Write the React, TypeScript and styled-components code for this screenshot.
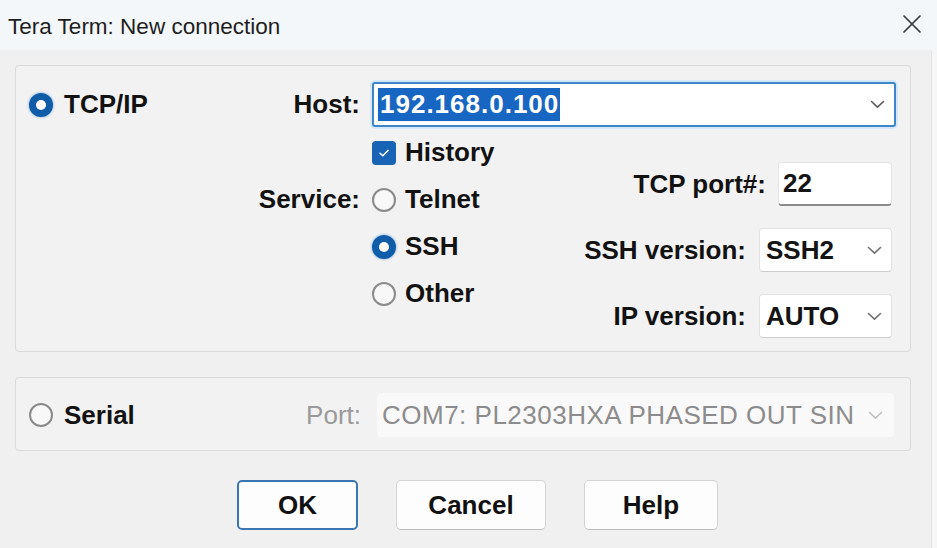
import React from 'react';
import styled, { createGlobalStyle, css } from 'styled-components';

const Global = createGlobalStyle`
  html, body { margin: 0; padding: 0; background: #f6f6f6; }
  body {
    width: 937px; height: 548px; overflow: hidden;
    font-family: "Liberation Sans", Arial, sans-serif; color: #151515;
  }
  * { box-sizing: border-box; }
`;

const Window = styled.div`
  width: 937px; height: 548px;
  display: flex; flex-direction: column;
  background: #f6f6f6;
`;

const TitleBar = styled.div`
  height: 50px; flex: none;
  display: flex; align-items: center; justify-content: space-between;
  padding: 0 14px 0 8px;
  background: #f4f7fa;
`;

const Title = styled.div`
  font-size: 22.5px; color: #1e1e1e; padding-top: 4px;
`;

const CloseButton = styled.div`
  width: 22px; height: 22px; display: flex; align-items: center; justify-content: center;
  margin-top: -2px;
`;

const Frame = styled.div`
  flex: 1; display: flex;
`;

const Body = styled.div`
  width: 932px; height: 100%;
  display: flex; flex-direction: column;
  padding: 15px 20px 0 15px;
  background: #f0f0f0;
  border-right: 1px solid #e3e3e3;
`;

const GroupBox = styled.div`
  width: 896px;
  border: 1px solid #dadada;
  border-radius: 4px;
  background: #f2f2f2;
`;

const TcpGroup = styled(GroupBox)`
  display: grid;
  grid-template-columns: 331px 1fr;
  column-gap: 12px; row-gap: 2px;
  padding: 16px 14px 13px 13px;
`;

const SerialGroup = styled(GroupBox)`
  margin-top: 25px;
  display: flex; align-items: center;
  padding: 15px 16px 13px 13px;
`;

const HostCell = styled.div`
  display: flex; align-items: center; justify-content: space-between;
`;

const ServiceLabelCell = styled.div`
  padding-top: 47px;
  height: 94px;
  display: flex; align-items: center; justify-content: flex-end;
`;

const Option = styled.label<{ $gap?: number }>`
  display: flex; align-items: center; gap: ${p => p.$gap ?? 9}px;
`;

const RadioDot = styled.span<{ $checked?: boolean }>`
  width: 24px; height: 24px; border-radius: 50%; flex: none;
  display: flex; align-items: center; justify-content: center;
  ${p => p.$checked
    ? css`background: #0f5ca8; box-shadow: 0 0 2px 1px rgba(70, 140, 220, 0.35);`
    : css`border: 2px solid #8a8a8a; background: #f8f8f8;`}
  &::after {
    content: '';
    width: 10px; height: 10px; border-radius: 50%; background: #fff;
    display: ${p => (p.$checked ? 'block' : 'none')};
  }
`;

const CheckBox = styled.span`
  width: 24px; height: 24px; border-radius: 4px; flex: none;
  background: #1764b6;
  display: flex; align-items: center; justify-content: center;
`;

const OptionText = styled.span`
  font-size: 26px; font-weight: bold; color: #121212;
`;

const FieldLabel = styled.span<{ $muted?: boolean }>`
  font-size: 26px; white-space: nowrap;
  font-weight: ${p => (p.$muted ? 'normal' : 'bold')};
  color: ${p => (p.$muted ? '#9a9a9a' : '#121212')};
`;

const HostCombo = styled.div`
  height: 45px;
  border: 2px solid #3f86c8; border-radius: 3px;
  background: #fff;
  box-shadow: 0 0 0 2px #d6e8f8;
  display: flex; align-items: center; justify-content: space-between;
  padding: 0 9px 0 4px;
`;

const Selection = styled.span`
  background: #1766c2; color: #fff;
  font-size: 26px; font-weight: bold; letter-spacing: 1px;
  line-height: 33px; padding: 0 1px 0 2px;
`;

const ServiceArea = styled.div`
  display: flex; justify-content: space-between;
`;

const OptionList = styled.div`
  display: flex; flex-direction: column;
`;

const OptionRow = styled.div`
  height: 47px; display: flex; align-items: center;
`;

const FieldColumn = styled.div`
  display: flex; flex-direction: column; align-items: flex-end;
  padding-top: 33px; gap: 22px; margin-right: 4px;
`;

const FieldRow = styled.div<{ $gap?: number }>`
  display: flex; align-items: center; gap: ${p => p.$gap ?? 13}px;
`;

const TextBox = styled.div`
  width: 114px; height: 44px;
  background: #fff;
  border: 1px solid #e4e4e4; border-bottom: 2px solid #8a8a8a;
  border-radius: 4px;
  display: flex; align-items: center; padding-left: 4px;
  font-size: 26px; font-weight: bold;
`;

const DropSelect = styled.div<{ $width: number; $disabled?: boolean }>`
  width: ${p => p.$width}px; height: 44px;
  display: flex; align-items: center; justify-content: space-between;
  border-radius: 4px; overflow: hidden; white-space: nowrap;
  font-size: 26px;
  ${p => p.$disabled
    ? css`
        background: #f9f9f9; color: #8c8c8c; font-weight: normal;
        letter-spacing: 0.5px; padding: 0 11px 0 5px;
      `
    : css`
        background: #fff; color: #141414; font-weight: bold;
        border: 1px solid #e2e2e2; border-bottom-color: #cdcdcd;
        padding: 0 9px 0 6px;
      `}
`;

const SelectValue = styled.span`
  overflow: hidden;
`;

const PortSpacer = styled.div`
  flex: 1;
`;

const PortField = styled.div`
  display: flex; align-items: center; gap: 16px;
`;

const ButtonBar = styled.div`
  margin-top: 29px;
  display: flex; gap: 38px;
  padding-left: 222px;
`;

const DialogButton = styled.button<{ $width: number; $primary?: boolean }>`
  width: ${p => p.$width}px; height: 50px;
  font-family: "Liberation Sans", Arial, sans-serif;
  font-size: 26px; font-weight: bold; color: #111;
  background: #fdfdfd;
  border-radius: 5px;
  ${p => p.$primary
    ? css`border: 2px solid #3b76b3;`
    : css`border: 1px solid #d3d3d3; border-bottom-color: #bdbdbd;`}
  padding: 0;
`;

const Chevron = ({ color = '#5c5c5c' }: { color?: string }) => (
  <svg width="15" height="9" viewBox="0 0 15 9">
    <polyline points="1.5,1.5 7.5,7.2 13.5,1.5" fill="none" stroke={color} strokeWidth="1.6" strokeLinecap="round" strokeLinejoin="round" />
  </svg>
);

const CheckMark = () => (
  <svg width="12" height="10" viewBox="0 0 12 10">
    <polyline points="2,5.2 4.8,7.8 10,2.4" fill="none" stroke="#ffffff" strokeWidth="1.5" strokeLinecap="round" strokeLinejoin="round" />
  </svg>
);

const CloseIcon = () => (
  <svg width="20" height="20" viewBox="0 0 20 20">
    <path d="M2 2 L18 18 M18 2 L2 18" stroke="#303030" strokeWidth="1.6" strokeLinecap="round" />
  </svg>
);

export default function App() {
  return (
    <>
      <Global />
      <Window>
        <TitleBar>
          <Title>Tera Term: New connection</Title>
          <CloseButton><CloseIcon /></CloseButton>
        </TitleBar>
        <Frame>
          <Body>
            <TcpGroup>
              <HostCell>
                <Option $gap={11}>
                  <RadioDot $checked />
                  <OptionText>TCP/IP</OptionText>
                </Option>
                <FieldLabel>Host:</FieldLabel>
              </HostCell>
              <HostCombo>
                <Selection>192.168.0.100</Selection>
                <Chevron />
              </HostCombo>

              <ServiceLabelCell>
                <FieldLabel>Service:</FieldLabel>
              </ServiceLabelCell>
              <ServiceArea>
                <OptionList>
                  <OptionRow>
                    <Option>
                      <CheckBox><CheckMark /></CheckBox>
                      <OptionText>History</OptionText>
                    </Option>
                  </OptionRow>
                  <OptionRow>
                    <Option>
                      <RadioDot />
                      <OptionText>Telnet</OptionText>
                    </Option>
                  </OptionRow>
                  <OptionRow>
                    <Option>
                      <RadioDot $checked />
                      <OptionText>SSH</OptionText>
                    </Option>
                  </OptionRow>
                  <OptionRow>
                    <Option>
                      <RadioDot />
                      <OptionText>Other</OptionText>
                    </Option>
                  </OptionRow>
                </OptionList>
                <FieldColumn>
                  <FieldRow $gap={12}>
                    <FieldLabel>TCP port#:</FieldLabel>
                    <TextBox>22</TextBox>
                  </FieldRow>
                  <FieldRow>
                    <FieldLabel>SSH version:</FieldLabel>
                    <DropSelect $width={133}>
                      <SelectValue>SSH2</SelectValue>
                      <Chevron color="#707070" />
                    </DropSelect>
                  </FieldRow>
                  <FieldRow>
                    <FieldLabel>IP version:</FieldLabel>
                    <DropSelect $width={133}>
                      <SelectValue>AUTO</SelectValue>
                      <Chevron color="#707070" />
                    </DropSelect>
                  </FieldRow>
                </FieldColumn>
              </ServiceArea>
            </TcpGroup>

            <SerialGroup>
              <Option $gap={11}>
                <RadioDot />
                <OptionText>Serial</OptionText>
              </Option>
              <PortSpacer />
              <PortField>
                <FieldLabel $muted>Port:</FieldLabel>
                <DropSelect $width={517} $disabled>
                  <SelectValue>COM7: PL2303HXA PHASED OUT SIN</SelectValue>
                  <Chevron color="#c2c2c2" />
                </DropSelect>
              </PortField>
            </SerialGroup>

            <ButtonBar>
              <DialogButton $width={121} $primary>OK</DialogButton>
              <DialogButton $width={150}>Cancel</DialogButton>
              <DialogButton $width={134}>Help</DialogButton>
            </ButtonBar>
          </Body>
        </Frame>
      </Window>
    </>
  );
}
